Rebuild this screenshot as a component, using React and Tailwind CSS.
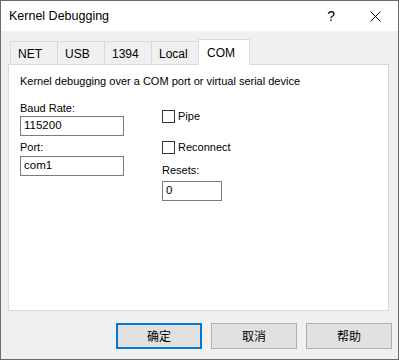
const tabs = ["NET", "USB", "1394", "Local"];

const TextBox = ({ value, className }) => (
  <div
    className={`h-[20px] border border-[#7a7a7a] bg-white px-[3px] flex items-center text-[11.5px] leading-none ${className}`}
  >
    {value}
  </div>
);

const CheckRow = ({ label, className }) => (
  <div className={`flex items-center gap-[3px] ${className}`}>
    <div className="w-[13px] h-[13px] border border-[#333333] bg-white" />
    <span className="text-[11px] leading-[13px]">{label}</span>
  </div>
);

const DialogButton = ({ label, primary }) => (
  <button
    className={`w-[86px] h-[26px] flex items-center justify-center text-[12px] bg-[#e1e1e1] ${
      primary ? "border-2 border-[#0078d7]" : "border border-[#adadad]"
    }`}
    style={{ fontFamily: '"Noto Sans CJK SC", sans-serif' }}
  >
    {label}
  </button>
);

export default function App() {
  return (
    <div
      className="w-[399px] h-[360px] flex flex-col border border-[#6b6b6b] bg-[#f0f0f0] text-black"
      style={{ fontFamily: '"Liberation Sans", "Noto Sans CJK SC", sans-serif' }}
    >
      {/* title bar */}
      <div className="h-[30px] bg-white flex items-center pl-[8px] pr-[17px] pt-[1px]">
        <span className="text-[12.5px] flex-1">Kernel Debugging</span>
        <span className="text-[14px] mr-[35px]">?</span>
        <svg width="11" height="11" viewBox="0 0 11 11">
          <path d="M0.5 0.5 L10.5 10.5 M10.5 0.5 L0.5 10.5" stroke="#000" strokeWidth="1" />
        </svg>
      </div>

      {/* body */}
      <div className="flex-1 flex flex-col px-[7px] pt-[8px]">
        {/* tabs */}
        <div className="flex items-end h-[25px] pl-[2px]">
          {tabs.map((t) => (
            <div
              key={t}
              className="w-[48px] h-[23px] border border-b-0 border-[#d9d9d9] -mr-px bg-[#f0f0f0] flex items-center pl-[7px] pt-[1px] text-[12px]"
            >
              {t}
            </div>
          ))}
          <div className="w-[52px] h-[26px] -mb-px relative z-10 border border-b-0 border-[#d9d9d9] bg-white flex items-center pl-[8px] text-[12px]">
            COM
          </div>
        </div>

        {/* panel */}
        <div className="h-[247px] w-[381px] border border-[#d9d9d9] bg-white pl-[11px] pt-[8px] text-[11px]">
          <div className="leading-[16px]">
            Kernel debugging over a COM port or virtual serial device
          </div>
          <div className="flex mt-[12px]">
            <div className="w-[104px] flex flex-col">
              <div className="leading-[15px]">Baud Rate:</div>
              <TextBox value="115200" />
              <div className="leading-[15px] mt-[4px]">Port:</div>
              <TextBox value="com1" className="mt-[1px]" />
            </div>
            <div className="ml-[38px] flex flex-col">
              <CheckRow label="Pipe" className="mt-[9px]" />
              <CheckRow label="Reconnect" className="mt-[18px]" />
              <div className="leading-[15px] mt-[9px]">Resets:</div>
              <TextBox value="0" className="w-[60px] mt-[3px]" />
            </div>
          </div>
        </div>

        {/* buttons */}
        <div className="flex justify-end gap-[9px] mt-[12px] -mr-[1px]">
          <DialogButton label="确定" primary />
          <DialogButton label="取消" />
          <DialogButton label="帮助" />
        </div>
      </div>
    </div>
  );
}
